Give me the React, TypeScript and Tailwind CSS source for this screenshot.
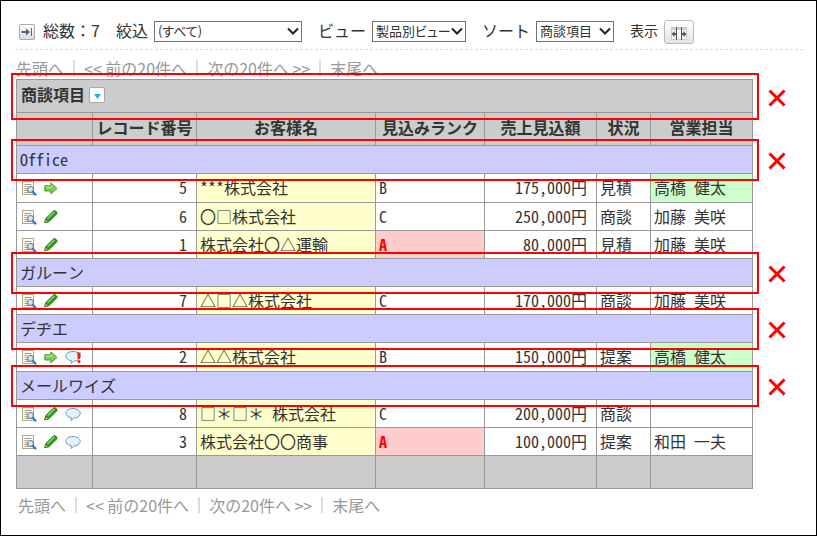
import type { ReactNode } from 'react';

type Deal = {
  id: number;
  customer: string;
  rank: string;
  amount: string;
  status: string;
  owner: string;
  mine?: boolean;
  comment?: 'read' | 'unread';
};

type Group = {
  name: string;
  deals: Deal[];
};

const groups: Group[] = [
  {
    name: 'Office',
    deals: [
      { id: 5, customer: '***株式会社', rank: 'B', amount: '175,000円', status: '見積', owner: '高橋 健太', mine: true },
      { id: 6, customer: '〇□株式会社', rank: 'C', amount: '250,000円', status: '商談', owner: '加藤 美咲' },
      { id: 1, customer: '株式会社〇△運輸', rank: 'A', amount: '80,000円', status: '見積', owner: '加藤 美咲' },
    ],
  },
  {
    name: 'ガルーン',
    deals: [
      { id: 7, customer: '△□△株式会社', rank: 'C', amount: '170,000円', status: '商談', owner: '加藤 美咲' },
    ],
  },
  {
    name: 'デヂエ',
    deals: [
      { id: 2, customer: '△△株式会社', rank: 'B', amount: '150,000円', status: '提案', owner: '高橋 健太', mine: true, comment: 'unread' },
    ],
  },
  {
    name: 'メールワイズ',
    deals: [
      { id: 8, customer: '□＊□＊ 株式会社', rank: 'C', amount: '200,000円', status: '商談', owner: '', comment: 'read' },
      { id: 3, customer: '株式会社〇〇商事', rank: 'A', amount: '100,000円', status: '提案', owner: '和田 一夫', comment: 'read' },
    ],
  },
];

const headers = ['', 'レコード番号', 'お客様名', '見込みランク', '売上見込額', '状況', '営業担当'];

const cell = 'border border-[#999] pl-[3px] pb-0.5';
const numberCell = 'border border-[#999] pr-[9px] pb-0.5 text-right';

function DetailIcon() {
  return (
    <svg width="15" height="16" viewBox="0 0 15 16" aria-hidden="true">
      <rect x="0.5" y="1.5" width="11" height="13" fill="#fbf8ee" stroke="#b3a78f" />
      <path d="M2.5 4.5h7M2.5 6.5h3M2.5 8.5h2M2.5 10.5h3M2.5 12.500h5" stroke="#a39c88" />
      <circle cx="8.5" cy="9.5" r="3" fill="#d3e5f4" stroke="#6a849b" strokeWidth="1.2" />
      <path d="M10.9 12l2.500 2.500" stroke="#2c7fb8" strokeWidth="2.4" strokeLinecap="round" />
    </svg>
  );
}

function ArrowIcon() {
  return (
    <svg width="14" height="16" viewBox="0 0 14 16" aria-hidden="true">
      <path d="M0.8 5.8h6v-3l6.2 5.7-6.2 5.3v-2.8h-6z" fill="#7bd152" stroke="#4a9b35" strokeLinejoin="round" />
      <path d="M2 7.2h5.8V5.4" stroke="#b6ec98" fill="none" />
    </svg>
  );
}

function PencilIcon() {
  return (
    <svg width="14" height="16" viewBox="0 0 14 16" aria-hidden="true">
      <path d="M0.8 13.6l1-4L9.4 2.1c1.2-1.2 4.5.9 3.4 2.7L5 12.6z" fill="#2f9e1b" stroke="#1b6f10" strokeLinejoin="round" />
      <path d="M3.4 9.8l7-7" stroke="#86dd62" strokeWidth="1.3" />
      <path d="M0.8 13.8l.9-3.4 2.5 2.4z" fill="#efe3b8" stroke="#3a5a20" strokeWidth="0.7" />
    </svg>
  );
}

function CommentIcon({ unread }: { unread: boolean }) {
  return (
    <svg width="17" height="16" viewBox="0 0 17 16" aria-hidden="true">
      <path
        d="M8 2.5c4 0 7.2 2 7.2 4.7S12 12 8.6 12.1l-2.3 2.4.1-2.7C3.2 11.3.8 9.6.8 7.2.8 4.5 4 2.5 8 2.500z"
        fill="#e2f1fc"
        stroke="#6a9cc4"
      />
      {unread && (
        <>
          <path d="M12.2 3.5h3.3l-.4 6.500h-2.300z" fill="#e8200c" />
          <circle cx="14" cy="12.500" r="1.600" fill="#e8200c" />
        </>
      )}
    </svg>
  );
}

// red frame around the row plus the cross mark at its right
function RowMark({ tall = false }: { tall?: boolean }) {
  return (
    <div
      className={`pointer-events-none absolute -left-[6px] -right-[7px] -top-[7px] z-10 border-2 border-[#ff0000] ${
        tall ? 'h-[47px]' : 'h-[42px]'
      }`}
    >
      <svg className="absolute -right-[29px] top-1/2 -mt-2" width="18" height="18" viewBox="0 0 18 18" aria-hidden="true">
        <path d="M1.5 1.5l15 15M16.5 1.5l-15 15" stroke="#ff0000" strokeWidth="3" />
      </svg>
    </div>
  );
}

function Pager() {
  const links = ['先頭へ', '<< 前の20件へ', '次の20件へ >>', '末尾へ'];
  return (
    <nav className="flex h-5 items-center text-base leading-5 text-[#999]">
      {links.map((link, i) => (
        <span key={link} className="flex items-center">
          {i > 0 && <span className="mx-[9px] h-4 w-0.5 bg-[#ddd]" />}
          <a href="#" className="whitespace-nowrap">{link}</a>
        </span>
      ))}
    </nav>
  );
}

type PickerProps = {
  id: string;
  label: string;
  options: string[];
  width: string;
};

function Picker({ id, label, options, width }: PickerProps) {
  return (
    <div className="flex items-center gap-1.5">
      <label htmlFor={id} className="whitespace-nowrap pb-0.5">{label}</label>
      <div className={`relative ${width}`}>
        <select
          id={id}
          className="block h-[21px] w-full appearance-none border border-[#707070] bg-white pl-[3px] text-[13px] leading-[18px] text-[#333] [font-feature-settings:'palt']"
        >
          {options.map((option) => (
            <option key={option}>{option}</option>
          ))}
        </select>
        <svg className="pointer-events-none absolute right-[3px] top-[6px]" width="12" height="9" viewBox="0 0 12 9" aria-hidden="true">
          <path d="M1 1.5l5 5 5-5" fill="none" stroke="#222" strokeWidth="2" />
        </svg>
      </div>
    </div>
  );
}

function GroupRow({ children }: { children: ReactNode }) {
  return (
    <tr>
      <td colSpan={7} className={`${cell} relative h-7 bg-[#ccccff]`}>
        {children}
        <RowMark />
      </td>
    </tr>
  );
}

function DealRow({ deal }: { deal: Deal }) {
  const hot = deal.rank === 'A';
  return (
    <tr className={deal.mine ? 'h-[29px]' : 'h-7'}>
      <td className="border border-[#999] pl-[5px]">
        <div className="flex items-center gap-[7px]">
          <button type="button" aria-label="詳細"><DetailIcon /></button>
          <button type="button" aria-label="編集">{deal.mine ? <ArrowIcon /> : <PencilIcon />}</button>
          {deal.comment && (
            <button type="button" aria-label="コメント"><CommentIcon unread={deal.comment === 'unread'} /></button>
          )}
        </div>
      </td>
      <td className={numberCell}>{deal.id}</td>
      <td className={`${cell} bg-[#ffffcc]`}>{deal.customer}</td>
      <td className={hot ? `${cell} bg-[#ffcccc] font-bold text-[#ff0000]` : cell}>{deal.rank}</td>
      <td className={numberCell}>{deal.amount}</td>
      <td className={cell}>{deal.status}</td>
      <td className={deal.mine ? `${cell} bg-[#ccffcc]` : cell}>{deal.owner}</td>
    </tr>
  );
}

export default function App() {
  return (
    <main className="min-h-screen border border-black bg-white font-['Noto_Sans_CJK_JP',sans-serif] text-base text-[#333]">
      <div className="ml-[14px] mr-[13px] border-b border-dashed border-[#ddd] pb-[6px] pt-[18px]">
        <div className="flex h-6 items-center gap-4 pl-1 leading-5">
          <div className="flex items-center gap-2">
            <button
              type="button"
              aria-label="パネルを開く"
              className="mt-0.5 flex h-4 w-4 items-center justify-center rounded-xs border border-[#aaa] bg-gradient-to-b from-white to-[#ddd]"
            >
              <svg width="12" height="10" viewBox="0 0 12 10" aria-hidden="true">
                <path d="M0.5 4h4.5V1.5L9 5 5 8.5V6H.5z" fill="#4a6491" />
                <path d="M10.5 1v8" stroke="#4a6491" />
              </svg>
            </button>
            <span className="whitespace-nowrap pb-0.5">総数：7</span>
          </div>
          <Picker id="filter" label="絞込" options={['(すべて)']} width="w-[148px]" />
          <Picker id="view" label="ビュー" options={['製品別ビュー']} width="w-[94px]" />
          <Picker id="sort" label="ソート" options={['商談項目']} width="w-[78px]" />
          <div className="flex items-center gap-1.5 text-sm leading-5">
            <span className="whitespace-nowrap pb-0.5">表示</span>
            <button
              type="button"
              aria-label="列幅の調整"
              className="mt-0.5 flex h-6 w-[30px] items-center justify-center rounded-[3px] border border-[#b4bcbc] bg-gradient-to-b from-white to-[#e4e4e4]"
            >
              <svg className="mt-0.5" width="16" height="13" viewBox="0 0 16 13" aria-hidden="true">
                <path d="M0 0h16v13H0z" fill="#ccc" />
                <path d="M1 3h4v9H1zM6 3h4v9H6zM11 3h4v9h-4z" fill="#f7f7f7" />
                <path d="M5.5 0v13M10.5 0v13" stroke="#555" />
                <path d="M0.5 7L3.5 4v2H5v2H3.5v2zM15.5 7l-3-3v2H11v2h1.5v2z" fill="#555" />
              </svg>
            </button>
          </div>
        </div>
      </div>

      <div className="ml-[15px] mr-[63px] pt-2">
        <div className="pb-px">
          <Pager />
        </div>

        <table className="w-full table-fixed border-collapse leading-5">
          <colgroup>
            <col className="w-[76px]" />
            <col className="w-[104px]" />
            <col className="w-[179px]" />
            <col className="w-[109px]" />
            <col className="w-[112px]" />
            <col className="w-[54px]" />
            <col className="w-[102px]" />
          </colgroup>
          <thead className="bg-[#ccc]">
            <tr>
              <th colSpan={7} className="relative h-[33px] border border-[#999] pb-0.5 pl-1 text-left">
                <div className="flex items-center gap-1">
                  <span className="pb-0.5">商談項目</span>
                  <button
                    type="button"
                    aria-label="並べ替え"
                    className="flex h-4 w-4 items-center justify-center rounded-xs border border-[#aaa] bg-white"
                  >
                    <svg className="mt-0.5" width="7" height="5" viewBox="0 0 7 5" aria-hidden="true">
                      <path d="M0 0h7L3.5 5z" fill="#1ab2f5" />
                    </svg>
                  </button>
                </div>
                <RowMark tall />
              </th>
            </tr>
            <tr>
              {headers.map((header) => (
                <th key={header} className="h-[33px] whitespace-nowrap border border-[#999] pb-1">{header}</th>
              ))}
            </tr>
          </thead>
          {groups.map((group) => (
            <tbody key={group.name} className="whitespace-nowrap font-['Noto_Sans_Mono_CJK_JP','Noto_Sans_CJK_JP',sans-serif] font-light">
              <GroupRow>{group.name}</GroupRow>
              {group.deals.map((deal) => (
                <DealRow key={deal.id} deal={deal} />
              ))}
            </tbody>
          ))}
          <tfoot className="bg-[#ccc]">
            <tr>
              {headers.map((header) => (
                <td key={header} className="h-[33px] border border-[#999]" />
              ))}
            </tr>
          </tfoot>
        </table>

        <div className="pl-0.5 pt-1.5">
          <Pager />
        </div>
      </div>
    </main>
  );
}
